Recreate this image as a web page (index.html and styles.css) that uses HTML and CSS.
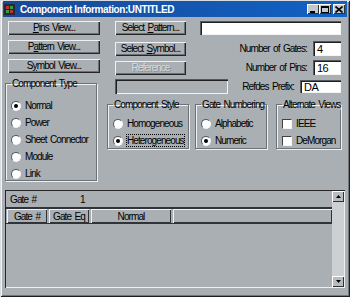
FILE: index.html
```html
<!DOCTYPE html>
<html>
<head>
	<title>Component Information:UNTITLED</title>
	<link rel="stylesheet" href="styles.css">
</head>
<body>
	<div class="window">
		<div class="titlebar">
			<svg class="app-icon" width="11" height="11" viewBox="0 0 11 11">
				<rect x="0" y="0" width="11" height="11" fill="#202a40"/>
				<rect x="2" y="2" width="3" height="3" fill="#c03030"/>
				<rect x="6" y="2" width="3" height="3" fill="#30a040"/>
				<rect x="2" y="6" width="3" height="3" fill="#30a040"/>
				<rect x="6" y="6" width="3" height="3" fill="#c03030"/>
			</svg>
			<span class="title">Component Information:UNTITLED</span>
			<div class="title-buttons">
				<span class="tbtn">
					<svg width="8" height="7" viewBox="0 0 8 7"><rect x="1" y="5" width="5" height="2" fill="#000"/></svg>
				</span>
				<span class="tbtn">
					<svg width="8" height="7" viewBox="0 0 8 7"><rect x="0.5" y="0.5" width="7" height="6" fill="none" stroke="#000"/><rect x="0" y="0" width="8" height="2" fill="#000"/></svg>
				</span>
				<span class="tbtn close">
					<svg width="8" height="7" viewBox="0 0 8 7"><path d="M0.5 0.5 L7.5 6.5 M7.5 0.5 L0.5 6.5" stroke="#000" stroke-width="1.6"/></svg>
				</span>
			</div>
		</div>

		<div class="main">
			<div class="left-col">
				<button class="btn btn-wide"><u>P</u>ins View...</button>
				<button class="btn btn-wide">P<u>a</u>ttern View...</button>
				<button class="btn btn-wide">S<u>y</u>mbol View...</button>
				<fieldset class="group type-group">
					<legend>Component Type</legend>
					<label class="radio"><span class="dot checked"></span>Normal</label>
					<label class="radio"><span class="dot"></span>Power</label>
					<label class="radio"><span class="dot"></span>Sheet Connector</label>
					<label class="radio"><span class="dot"></span>Module</label>
					<label class="radio"><span class="dot"></span>Link</label>
				</fieldset>
			</div>

			<div class="right-col">
				<div class="row">
					<button class="btn btn-small">Select <u>P</u>attern...</button>
					<div class="field field-long"></div>
				</div>
				<div class="row">
					<button class="btn btn-small">Select <u>S</u>ymbol...</button>
					<div class="field-row">
						<span class="field-label">Number of Gates:</span>
						<div class="field field-num">4</div>
					</div>
				</div>
				<div class="row">
					<button class="btn btn-small" disabled>Reference</button>
					<div class="field-row">
						<span class="field-label">Number of Pins:</span>
						<div class="field field-num">16</div>
					</div>
				</div>
				<div class="row row-ref">
					<div class="field field-disabled"></div>
					<div class="field-row">
						<span class="field-label">Refdes Prefix:</span>
						<div class="field field-prefix">DA</div>
					</div>
				</div>
				<div class="groups">
					<fieldset class="group style-group">
						<legend>Component Style</legend>
						<label class="radio"><span class="dot"></span>Homogeneous</label>
						<label class="radio"><span class="dot checked"></span><span class="focus">Heterogeneous</span></label>
					</fieldset>
					<fieldset class="group gate-group">
						<legend>Gate Numbering</legend>
						<label class="radio"><span class="dot"></span>Alphabetic</label>
						<label class="radio"><span class="dot checked"></span>Numeric</label>
					</fieldset>
					<fieldset class="group alt-group">
						<legend>Alternate Views</legend>
						<label class="radio"><span class="check"></span>IEEE</label>
						<label class="radio"><span class="check"></span>DeMorgan</label>
					</fieldset>
				</div>
			</div>
		</div>

		<div class="grid-panel">
			<div class="grid-area">
				<div class="grid-info">
					<span class="info-label">Gate #</span>
					<span class="info-value">1</span>
				</div>
				<div class="grid-head">
					<span class="hcell col-num">Gate #</span>
					<span class="hcell col-eq">Gate Eq</span>
					<span class="hcell col-normal">Normal</span>
					<span class="hcell col-rest"></span>
				</div>
			</div>
			<div class="scrollbar">
				<span class="sbtn">
					<svg width="5" height="3" viewBox="0 0 5 3"><path d="M2.5 0 L5 3 L0 3 Z" fill="#000"/></svg>
				</span>
				<span class="sbtn">
					<svg width="5" height="3" viewBox="0 0 5 3"><path d="M0 0 L5 0 L2.5 3 Z" fill="#000"/></svg>
				</span>
			</div>
		</div>
	</div>
</body>
</html>
```

FILE: styles.css
```css
body {
	margin: 0;
	padding: 0;
	font-family: "Liberation Sans", Arial, sans-serif;
	font-size: 10px;
	letter-spacing: -0.9px;
	word-spacing: 1.5px;
	color: #000;
}

.window {
	width: 350px;
	height: 297px;
	box-sizing: border-box;
	padding: 1px 3px 2px 3px;
	background-color: #a9afb3;
	box-shadow: inset 1px 1px #d8dcdf, inset -1px -1px #202020, inset 2px 2px #f4f4f4, inset -2px -2px #70767a;
	display: flex;
	flex-direction: column;
}

.titlebar {
	height: 16px;
	display: flex;
	align-items: center;
	background: linear-gradient(to right, #1a4996, #1062c6);
	padding: 0 2px 0 1px;
}

.app-icon {
	margin-right: 5px;
}

.title {
	color: #fff;
	font-weight: bold;
	font-size: 10px;
	letter-spacing: -0.4px;
	word-spacing: 0;
	flex: 1;
}

.title-buttons {
	display: flex;
}

.tbtn {
	width: 12px;
	height: 10px;
	background-color: #c4c8cc;
	box-shadow: inset 1px 1px #fff, inset -1px -1px #303030;
	display: flex;
	align-items: center;
	justify-content: center;
}

.tbtn.close {
	margin-left: 2px;
}

.main {
	display: flex;
	padding-left: 2px;
}

.left-col {
	width: 95px;
	display: flex;
	flex-direction: column;
	align-items: flex-start;
	padding-top: 4px;
}

.btn {
	height: 14px;
	padding: 0;
	margin: 0;
	border: none;
	font: inherit;
	letter-spacing: inherit;
	word-spacing: inherit;
	color: #000;
	background-color: #a9afb3;
	box-shadow: inset 1px 1px #eef0f2, inset -1px -1px #262626, inset -2px -2px #6a7074;
	display: flex;
	align-items: center;
	justify-content: center;
	line-height: 1;
	white-space: pre;
}

.btn-wide {
	width: 92px;
	margin-left: 3px;
	margin-bottom: 5px;
}

.btn-small {
	width: 71px;
	margin-left: 8px;
}

.btn[disabled] {
	color: #d6dade;
	text-shadow: 1px 1px #8a9094;
}

.group {
	margin: 0;
	padding: 0 0 0 5px;
	border: 1px solid #6c7276;
	box-shadow: 1px 1px #eef0f2, inset 1px 1px #eef0f2;
	min-width: 0;
}

.group legend {
	padding: 0 1px;
	margin-left: 0;
	line-height: 11px;
	white-space: nowrap;
}

.type-group {
	width: 92px;
	height: 103px;
	box-sizing: border-box;
	padding-top: 8px;
}

.radio {
	display: flex;
	align-items: center;
	height: 17px;
	white-space: nowrap;
}

.dot {
	width: 10px;
	height: 10px;
	border-radius: 50%;
	box-sizing: border-box;
	background-color: #fff;
	border: 1px solid #55595c;
	border-right-color: #f4f4f4;
	border-bottom-color: #f4f4f4;
	margin-right: 4px;
	display: flex;
	align-items: center;
	justify-content: center;
	flex: none;
}

.dot.checked::after {
	content: "";
	width: 4px;
	height: 4px;
	border-radius: 50%;
	background-color: #000;
}

.check {
	width: 10px;
	height: 10px;
	box-sizing: border-box;
	background-color: #fff;
	border: 1px solid #404040;
	border-right-color: #f4f4f4;
	border-bottom-color: #f4f4f4;
	margin-right: 4px;
	flex: none;
}

.focus {
	outline: 1px dotted #000;
}

.right-col {
	width: 234px;
	margin-left: 7px;
	display: flex;
	flex-direction: column;
	padding-top: 4px;
}

.row {
	display: flex;
	align-items: center;
	justify-content: space-between;
	height: 19px;
}

.row:first-child {
	height: 14px;
	margin-bottom: 4px;
}

.field {
	box-sizing: border-box;
	height: 15px;
	background-color: #fff;
	box-shadow: inset 1px 1px #55595c, inset 2px 2px #202020, inset -1px -1px #f4f4f4;
	padding: 3px 0 0 4px;
	line-height: 10px;
	font-size: 11px;
	letter-spacing: -0.5px;
}

.field-long {
	width: 141px;
	height: 14px;
}

.field-row {
	display: flex;
	align-items: center;
}

.field-label {
	margin-right: 6px;
}

.field-num {
	width: 28px;
}

.field-prefix {
	width: 41px;
	height: 13px;
	padding-top: 2px;
}

.row-ref {
	height: 18px;
}

.field-disabled {
	width: 113px;
	margin-left: 8px;
	background-color: #a9afb3;
}

.groups {
	display: flex;
	margin-top: 4px;
}

.groups .group {
	height: 50px;
	box-sizing: border-box;
	padding-top: 5px;
}

.style-group {
	width: 82px;
}

.gate-group {
	width: 72px;
	margin-left: 6px;
}

.alt-group {
	width: 65px;
	margin-left: 9px;
}

.grid-panel {
	display: flex;
	margin: 9px 2px 0 2px;
	height: 96px;
	box-shadow: inset 1px 1px #262626, inset -1px -1px #eef0f2;
	padding: 1px;
}

.grid-area {
	flex: 1;
	display: flex;
	flex-direction: column;
}

.grid-info {
	height: 16px;
	display: flex;
	align-items: center;
	border-bottom: 2px solid #303438;
}

.info-label {
	width: 70px;
	padding-left: 4px;
}

.grid-head {
	display: flex;
	height: 14px;
	border-bottom: 1px solid #303438;
}

.hcell {
	box-sizing: border-box;
	height: 14px;
	display: flex;
	align-items: center;
	justify-content: center;
	background-color: #a9afb3;
	box-shadow: inset 1px 1px #eef0f2, inset -1px -1px #303438;
	margin-right: 2px;
}

.col-num {
	width: 40px;
	margin-left: 1px;
}

.col-eq {
	width: 40px;
}

.col-normal {
	width: 80px;
}

.col-rest {
	flex: 1;
	margin-right: 0;
}

.scrollbar {
	width: 12px;
	background-color: #cdd0d3;
	display: flex;
	flex-direction: column;
	justify-content: space-between;
}

.sbtn {
	height: 11px;
	background-color: #b8bcc0;
	box-shadow: inset 1px 1px #fff, inset -1px -1px #303030;
	display: flex;
	align-items: center;
	justify-content: center;
}
```
